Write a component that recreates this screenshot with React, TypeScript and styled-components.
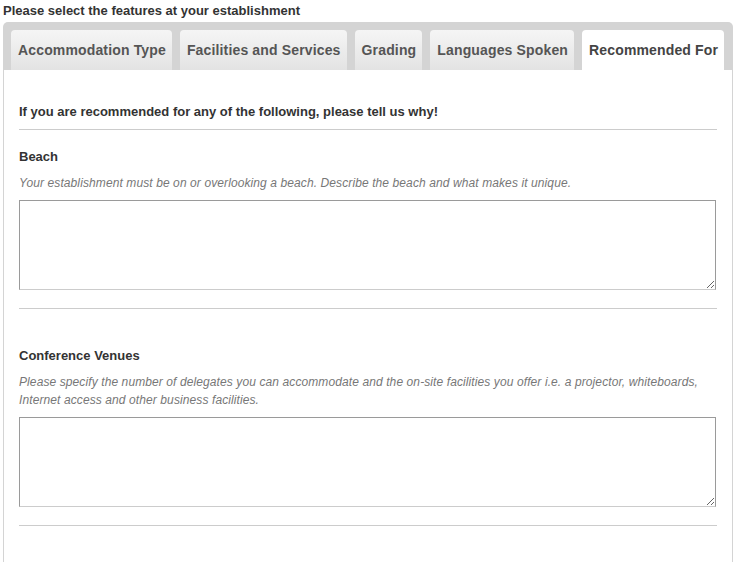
import React from 'react';
import styled, { createGlobalStyle } from 'styled-components';

const GlobalStyle = createGlobalStyle`
  body {
    margin: 0;
    background: #ffffff;
    font-family: "Liberation Sans", Arial, sans-serif;
  }
`;

const S = {
  Page: styled.div`
    width: 738px;
    padding: 3px 0 0 3px;
    box-sizing: border-box;
  `,

  Heading: styled.div`
    font-size: 13px;
    line-height: 16px;
    font-weight: bold;
    color: #333333;
  `,

  TabBar: styled.div`
    width: 730px;
    margin-top: 3px;
    box-sizing: border-box;
    background: #d4d4d4;
    border-radius: 5px 5px 0 0;
    padding: 8px 8px 0;
    display: flex;
    gap: 8px;
  `,

  Tab: styled.div<{ $active?: boolean }>`
    height: 40px;
    padding: 0 6px 0 7px;
    display: flex;
    align-items: center;
    border-radius: 4px 4px 0 0;
    font-size: 14px;
    font-weight: bold;
    letter-spacing: 0.15px;
    white-space: nowrap;
    color: ${(p) => (p.$active ? '#444444' : '#555555')};
    background: ${(p) => (p.$active ? '#ffffff' : 'linear-gradient(#f5f5f5, #e3e3e3)')};
  `,

  Panel: styled.div`
    width: 730px;
    box-sizing: border-box;
    border: 1px solid #d4d4d4;
    border-top: none;
    padding: 34px 15px 40px;
  `,

  Intro: styled.div`
    font-size: 13px;
    line-height: 16px;
    font-weight: bold;
    color: #333333;
  `,

  Rule: styled.hr<{ $top: number; $bottom: number }>`
    border: none;
    border-top: 1px solid #cccccc;
    margin: ${(p) => p.$top}px 0 ${(p) => p.$bottom}px;
  `,

  Section: styled.div`
    display: flex;
    flex-direction: column;
  `,

  Label: styled.div`
    font-size: 13px;
    line-height: 16px;
    font-weight: bold;
    color: #333333;
  `,

  Hint: styled.div`
    margin: 10px 0 7.5px;
    font-size: 12px;
    line-height: 17.5px;
    font-style: italic;
    letter-spacing: 0.1px;
    color: #777777;
  `,

  Field: styled.textarea`
    width: 697px;
    height: 90px;
    box-sizing: border-box;
    margin: 0;
    border: 1px solid #9a9a9a;
    border-bottom-color: #cccccc;
    font-family: "Liberation Sans", Arial, sans-serif;
    font-size: 13px;
    outline: none;
    resize: both;
    display: block;
  `,
};

const tabs = ['Accommodation Type', 'Facilities and Services', 'Grading', 'Languages Spoken', 'Recommended For'];

const sections = [
  {
    label: 'Beach',
    hint: 'Your establishment must be on or overlooking a beach. Describe the beach and what makes it unique.',
  },
  {
    label: 'Conference Venues',
    hint: 'Please specify the number of delegates you can accommodate and the on-site facilities you offer i.e. a projector, whiteboards, Internet access and other business facilities.',
  },
];

const App: React.FC = () => {
  return (
    <>
      <GlobalStyle />
      <S.Page>
        <S.Heading>Please select the features at your establishment</S.Heading>
        <S.TabBar>
          {tabs.map((t) => (
            <S.Tab key={t} $active={t === 'Recommended For'}>
              {t}
            </S.Tab>
          ))}
        </S.TabBar>
        <S.Panel>
          <S.Intro>If you are recommended for any of the following, please tell us why!</S.Intro>
          <S.Rule $top={9} $bottom={19} />
          {sections.map(({ label, hint }, i) => (
            <S.Section key={label}>
              <S.Label>{label}</S.Label>
              <S.Hint>{hint}</S.Hint>
              <S.Field />
              <S.Rule $top={18} $bottom={i === sections.length - 1 ? 0 : 39} />
            </S.Section>
          ))}
        </S.Panel>
      </S.Page>
    </>
  );
};

export default App;
